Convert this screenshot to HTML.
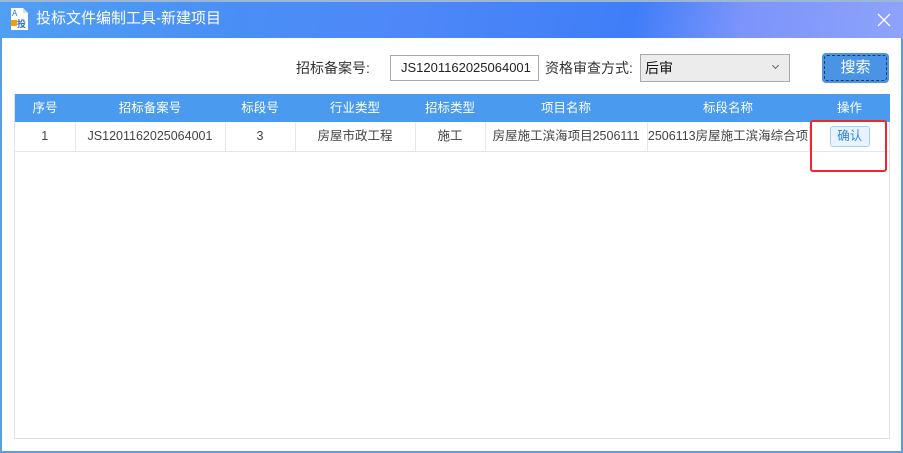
<!DOCTYPE html>
<html><head><meta charset="utf-8"><style>
*{margin:0;padding:0;box-sizing:border-box}
body{width:903px;height:453px;overflow:hidden;background:#fff;font-family:"Liberation Sans","Noto Sans CJK SC",sans-serif;position:relative}
.win{position:absolute;left:0;top:0;width:903px;height:453px;border:2px solid #5a9ee0;border-top:none;background:#fff}
.title{position:absolute;left:0;top:0;width:903px;height:38px;background:linear-gradient(100deg,#50a0f4 0%,#4a8ff5 25%,#4e88f8 45%,#3f7ef8 70%,#7c94fb 82%,#8da3fb 100%);border-top:2px solid #9ab6d8}
.title .t{position:absolute;left:36px;top:7px;color:#fff;font-size:15px;line-height:20px}
.close{position:absolute;right:12px;top:11px;width:14px;height:14px}
.lbl{position:absolute;font-size:14px;color:#333;line-height:20px}
.inp{position:absolute;left:390px;top:55px;width:149px;height:26px;border:1px solid #aaa;font-size:13px;color:#222;padding-left:10px;line-height:24px}
.sel{position:absolute;left:640px;top:54px;width:150px;height:28px;border:1px solid #aaa;background:#ececec;font-size:14px;color:#111;padding-left:4px;line-height:26px}
.sel .arr{position:absolute;right:11px;top:8px;width:5px;height:5px;border-right:1px solid #666;border-bottom:1px solid #666;transform:rotate(45deg)}
.btn{position:absolute;left:822px;top:53px;width:67px;height:30px;background:#4a94e6;border-radius:4px;color:#fff;font-size:15px;text-align:center;line-height:30px}
.btn:after{content:"";position:absolute;left:2px;top:2px;right:2px;bottom:2px;border:1px dashed #1a3a66;border-radius:3px}
.tbl{position:absolute;left:14px;top:94px;width:876px;height:345px;border:1px solid #dfe3ea;border-top:none}
table{border-collapse:collapse;width:875px;table-layout:fixed;font-size:12.5px;line-height:16px}
th{background:#4a9bf0;color:#fff;font-weight:normal;height:28px;padding:0;vertical-align:middle}
td{height:29px;color:#444;text-align:center;border-right:1px solid #e3e6ec;border-bottom:1px solid #e3e6ec;padding:0;white-space:nowrap;overflow:hidden;vertical-align:middle}
.ok{display:inline-block;width:40px;height:21px;line-height:19px;border:1px solid #a8d0f6;background:#e8f3fe;color:#2e86de;border-radius:3px;font-size:12.5px;vertical-align:middle}
.red{position:absolute;left:810px;top:120px;width:77px;height:52px;border:2px solid #f0262c;border-radius:3px}
</style></head><body>
<div class="win"></div>
<div class="title">
<svg style="position:absolute;left:9px;top:5px" width="20" height="24" viewBox="0 0 20 24"><path d="M2 1h12l5 5v17H2z" fill="#fff"/><path d="M14 1v5h5" fill="#dde" /><text x="3" y="9" font-size="8" fill="#2a6fd0" font-family="Liberation Sans">A</text><rect x="2" y="13" width="6" height="6" fill="#f4a000"/><text x="8" y="20" font-size="9" font-weight="bold" fill="#2a6fd0" font-family="Noto Sans CJK SC">投</text></svg>
<div class="t">投标文件编制工具-新建项目</div>
<svg class="close" viewBox="0 0 14 14"><path d="M1 1L13 13M13 1L1 13" stroke="#fff" stroke-width="1.3"/></svg>
</div>
<div class="lbl" style="left:296px;top:58px">招标备案号:</div>
<div class="inp">JS1201162025064001</div>
<div class="lbl" style="left:545px;top:58px">资格审查方式:</div>
<div class="sel">后审<span class="arr"></span></div>
<div class="btn">搜索</div>
<div class="tbl"><table>
<colgroup><col style="width:60px"><col style="width:150px"><col style="width:70px"><col style="width:120px"><col style="width:70px"><col style="width:162px"><col style="width:162px"><col style="width:81px"></colgroup>
<tr><th>序号</th><th>招标备案号</th><th>标段号</th><th>行业类型</th><th>招标类型</th><th>项目名称</th><th>标段名称</th><th>操作</th></tr>
<tr><td>1</td><td>JS1201162025064001</td><td>3</td><td>房屋市政工程</td><td>施工</td><td>房屋施工滨海项目2506111</td><td>2506113房屋施工滨海综合项</td><td style="border-right:none"><span class="ok">确认</span></td></tr>
</table></div>
<div class="red"></div>
</body></html>
